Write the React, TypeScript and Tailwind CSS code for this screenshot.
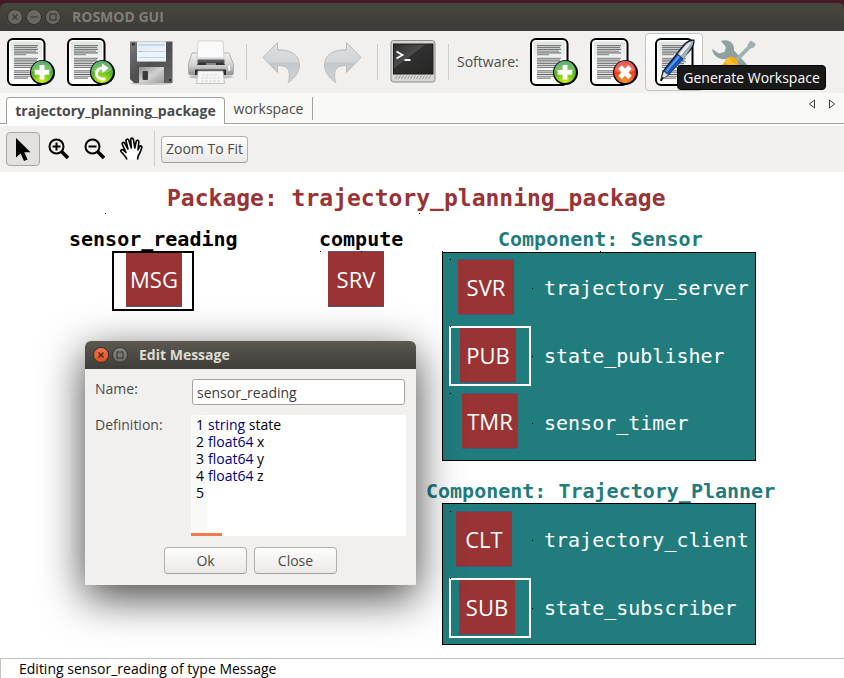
import type { ReactNode } from "react";

/* ---------- toolbar icons (48 x 48) ---------- */

const LINE_WIDTHS = [24, 23, 24, 22, 24, 12, 0, 24, 23, 24, 22, 24, 20, 0, 24, 23, 24, 21, 14];

function Page({ x = 0, children }: { x?: number; children?: ReactNode }) {
  return (
    <svg width="48" height="48" viewBox="0 0 48 48" aria-hidden="true">
      <defs>
        <linearGradient id="paper" x1="0" y1="0" x2="0" y2="1">
          <stop offset="0" stopColor="#dfe3e3" />
          <stop offset="0.5" stopColor="#f4f5f5" />
          <stop offset="1" stopColor="#ffffff" />
        </linearGradient>
        <radialGradient id="green" cx="0.5" cy="0.95" r="0.9">
          <stop offset="0" stopColor="#d8f010" />
          <stop offset="0.5" stopColor="#6cc424" />
          <stop offset="1" stopColor="#1f8f3c" />
        </radialGradient>
        <radialGradient id="red" cx="0.5" cy="0.95" r="0.9">
          <stop offset="0" stopColor="#ff9a20" />
          <stop offset="0.5" stopColor="#f4501c" />
          <stop offset="1" stopColor="#d81c1c" />
        </radialGradient>
      </defs>
      <g transform={`translate(${x} 0)`}>
        <rect x="1" y="1" width="36.5" height="46" rx="5" fill="#fff" stroke="#000" strokeWidth="2" />
        <rect x="3.5" y="3.5" width="31.500" height="41" rx="3" fill="url(#paper)" />
        {LINE_WIDTHS.map((w, i) => (
          <rect key={i} x="7" y={7.2 + i * 1.8} width={w} height="1" fill="#555" opacity={i % 2 ? 0.75 : 0.95} />
        ))}
      </g>
      {children}
    </svg>
  );
}

function Badge({ fill, children }: { fill: string; children: ReactNode }) {
  return (
    <g>
      <circle cx="35.500" cy="34.500" r="12.500" fill="#000" />
      <circle cx="35" cy="34" r="11" fill={fill} />
      <path d="M25 33a10 10 0 0 1 20-1c-5 3-13 4-20 1z" fill="#fff" opacity="0.28" />
      {children}
    </g>
  );
}

const AddPage = () => (
  <Page>
    <Badge fill="url(#green)">
      <path d="M35 27v14.500M27.700 34.300h14.600" stroke="#fff" strokeWidth="4.800" />
    </Badge>
  </Page>
);

const ReloadPage = () => (
  <Page>
    <Badge fill="url(#green)">
      <path d="M38.500 41c-5 .8-9-1.500-9-5.500 0-3.600 3-5.500 7-5.500" fill="none" stroke="#fff" strokeWidth="3" />
      <path d="M35 25.500l6.500 4.500-6 5z" fill="#fff" />
    </Badge>
  </Page>
);

const DeletePage = () => (
  <Page>
    <Badge fill="url(#red)">
      <path d="M30 29l10 10.500M40 29l-10 10.500" stroke="#fff" strokeWidth="4.800" />
    </Badge>
  </Page>
);

const WritePage = () => (
  <Page x={5}>
    <path d="M10 43l2.500-10L33 7c3-4 7-6 11.500-5.500C45 5 44 8 41 12L19 37z" fill="#10151c" />
    <path d="M11 42l2.800-8.500 4.400 3.300z" fill="#d9dde2" />
    <path d="M13.800 33.200L27 16.500l6.500 5L18.300 37z" fill="#1556b4" />
    <path d="M15.500 33L28 17.600l2 1.500L17 34z" fill="#5b9bea" />
    <path d="M27.500 16L34 8c2.500-3.300 5.500-5 9.500-5.200-.2 3.700-1.500 6-3.800 9L33.800 21z" fill="#a3adb8" />
    <path d="M29 15.800L35 8.600c2-2.500 4.500-4 7-4.800L31 17.400z" fill="#eef1f4" />
    <path d="M11 43l2-4" stroke="#000" strokeWidth="1.500" />
  </Page>
);

const Floppy = () => (
  <svg width="48" height="48" viewBox="0 0 48 48" aria-hidden="true">
    <defs>
      <linearGradient id="disk" x1="0" y1="0" x2="1" y2="1">
        <stop offset="0" stopColor="#7a7a7c" />
        <stop offset="0.5" stopColor="#4e4e50" />
        <stop offset="1" stopColor="#646466" />
      </linearGradient>
      <linearGradient id="metal" x1="0" y1="0" x2="1" y2="1">
        <stop offset="0" stopColor="#8d8d8d" />
        <stop offset="0.5" stopColor="#d2d2d2" />
        <stop offset="1" stopColor="#9a9a9a" />
      </linearGradient>
    </defs>
    <ellipse cx="24" cy="45.500" rx="21" ry="1.500" fill="#000" opacity="0.18" />
    <path d="M3 3.500h42.500V45H7l-4-4z" fill="url(#disk)" />
    <rect x="5" y="5" width="2.500" height="2.500" fill="#2e2e30" />
    <rect x="42" y="41" width="2" height="2" fill="#2e2e30" />
    <rect x="10" y="3.500" width="29" height="20" fill="#e4eef8" />
    <path d="M11.500 7h26M11.500 13.500h26M11.500 19.500h26" stroke="#a3c0de" strokeWidth="1" />
    <path d="M10 15l29-7v15.500H10z" fill="#fff" opacity="0.3" />
    <rect x="12" y="29" width="25" height="16" fill="url(#metal)" />
    <rect x="15.500" y="33" width="5.500" height="9" rx="1" fill="#3c3c3e" />
  </svg>
);

const Printer = () => (
  <svg width="48" height="48" viewBox="0 0 48 48" aria-hidden="true">
    <defs>
      <linearGradient id="printer" x1="0" y1="0" x2="0" y2="1">
        <stop offset="0" stopColor="#f2f2f2" />
        <stop offset="0.55" stopColor="#d2d2d2" />
        <stop offset="1" stopColor="#8e8e90" />
      </linearGradient>
    </defs>
    <ellipse cx="24" cy="39" rx="22" ry="2" fill="#000" opacity="0.2" />
    <path d="M5 15h37l4.500 11v9a2 2 0 0 1-2 2h-41a2 2 0 0 1-2-2v-9z" fill="url(#printer)" stroke="#a2a2a4" strokeWidth="0.800" />
    <path d="M11 3h25l1 17H10z" fill="#fafafa" stroke="#c8c8ca" strokeWidth="0.800" />
    <path d="M10.500 21.500h27V27h-27z" fill="#57585a" />
    <path d="M12 24.500h24l2 2.500H10z" fill="#303133" />
    <rect x="19" y="25" width="10" height="2" fill="#85868a" />
    <rect x="41" y="27" width="2.500" height="6" fill="#fafafa" stroke="#b0b0b0" strokeWidth="0.500" />
    <path d="M8 31.500h31V37H8z" fill="#2c2c2e" />
    <path d="M11 33h25l1.500 12.500h-28z" fill="#f6f6f6" stroke="#b4b4b6" strokeWidth="0.800" />
    <path d="M15 37h17M14 40h19M14 43h19" stroke="#cfcfd1" strokeWidth="0.800" strokeDasharray="3 1" />
  </svg>
);

function CurvedArrow({ flip = false }: { flip?: boolean }) {
  return (
    <svg width="48" height="48" viewBox="0 0 48 48" aria-hidden="true">
      <defs>
        <linearGradient id="arrow" x1="0" y1="0" x2="0" y2="1">
          <stop offset="0" stopColor="#dcdedf" />
          <stop offset="0.48" stopColor="#d4d6d8" />
          <stop offset="0.52" stopColor="#c5c8ca" />
          <stop offset="1" stopColor="#d2d4d5" />
        </linearGradient>
      </defs>
      <g transform={flip ? "translate(48 0) scale(-1 1)" : undefined}>
        <path
          d="M5 19.500L19.500 4.500v7.300C33 11.500 41.500 17 41.500 27c0 7-5 13.500-11.500 17.500 2.500-5 2.500-15.500-5-16.500-2-.4-4-.5-5.500-.5v7z"
          fill="url(#arrow)"
          stroke="#b9bcbe"
          strokeWidth="1"
          strokeLinejoin="round"
        />
      </g>
    </svg>
  );
}

const Terminal = () => (
  <svg width="48" height="48" viewBox="0 0 48 48" aria-hidden="true">
    <defs>
      <linearGradient id="screen" x1="0" y1="0" x2="1" y2="1">
        <stop offset="0" stopColor="#2c2c2c" />
        <stop offset="0.400" stopColor="#4c4c4c" />
        <stop offset="0.420" stopColor="#303030" />
        <stop offset="1" stopColor="#262626" />
      </linearGradient>
    </defs>
    <rect x="2" y="2.500" width="44" height="41.500" rx="2.500" fill="#d6d6d4" stroke="#8c8c8a" strokeWidth="1" />
    <rect x="4.500" y="6" width="39.500" height="30" fill="url(#screen)" stroke="#1c1c1c" strokeWidth="1" />
    <path d="M6.500 41l2-3.500M9.500 41l2-3.500M12.500 41l2-3.500M15.500 41l2-3.500M18.500 41l2-3.500M21.500 41l2-3.500M24.500 41l2-3.500M27.500 41l2-3.500M30.500 41l2-3.500M33.500 41l2-3.500M36.500 41l2-3.500M39.500 41l2-3.500" stroke="#9e9e9c" strokeWidth="1" />
    <path d="M7.500 13.500l6 3.500-6 3.500" fill="none" stroke="#fff" strokeWidth="1.800" />
    <path d="M15.500 22h6" stroke="#fff" strokeWidth="2" />
  </svg>
);

const Tools = () => (
  <svg width="48" height="48" viewBox="0 0 48 48" aria-hidden="true">
    <path d="M11 3c7-2.500 14 2 13 9.500L44 34l-6 6-20-19.500C10 23 3 18 2 11l7 4.500 5.500-1.500 1.500-5z" fill="#8fa0a1" />
    <path d="M41 2.500l5 3.500-2 3.500-3.500 1L28 23l-2.500-2.500L37.500 8l1-3z" fill="#a3b0b1" />
    <path d="M18 19.500c5-3 11.500 2.500 10 9.500L14 43c-5 4-12-2-8-8z" fill="#f7ae14" />
    <path d="M18 19.500l10 9.500-3.500 3.500-10-9.500z" fill="#fbc02d" />
  </svg>
);

/* ---------- view tool icons ---------- */

const Pointer = () => (
  <svg width="20" height="26" viewBox="0 0 20 26" aria-hidden="true">
    <path d="M3 2v19.500l4.600-4L11 25l3.600-1.600-3.300-7.200H17.500z" fill="#000" />
  </svg>
);

function Magnifier({ plus = false }: { plus?: boolean }) {
  return (
    <svg width="24" height="24" viewBox="0 0 24 24" fill="none" stroke="#000" aria-hidden="true">
      <circle cx="9.500" cy="9.500" r="7" strokeWidth="2" />
      <path d={plus ? "M9.500 5.500v8M5.500 9.500h8" : "M5.500 9.500h8"} strokeWidth="2" />
      <path d="M14.500 14.500l6.500 6.500" strokeWidth="3.600" />
    </svg>
  );
}

const Hand = () => (
  <svg width="24" height="24" viewBox="0 0 24 24" fill="#fff" stroke="#000" strokeWidth="1.600" strokeLinejoin="round" aria-hidden="true">
    <path d="M8 22.500c-1-3-3.500-5-6-8-.7-1.200.8-2.600 2.200-1.500L7 15.500 3.300 7.300c-.6-1.800 1.600-2.700 2.500-1L9 12 7 4c-.3-2 2-2.600 2.800-.8L12.300 11l-.6-8.500c0-1.900 2.300-1.900 2.700 0L15.800 11l1.400-6.700c.5-1.700 2.700-1.300 2.600.5L19 13l1.500-3.300c.9-1.400 2.700-.7 2.300.9-.8 3.400-2.500 6.400-3.600 8.400l-.7 3.500" />
  </svg>
);

/* ---------- chrome ---------- */

function ToolButton({ label, active = false, children }: { label: string; active?: boolean; children: ReactNode }) {
  return (
    <button
      aria-label={label}
      className={`flex h-[58px] w-[58px] shrink-0 items-center justify-center rounded-[4px] border ${
        active ? "border-[#c6c4c1] bg-gradient-to-b from-white to-[#f3f2f1]" : "border-transparent"
      }`}
    >
      {children}
    </button>
  );
}

const Separator = () => (
  <div className="flex w-[9px] shrink-0 justify-center">
    <div className="h-9 w-px bg-[#d0cecb]" />
  </div>
);

function WindowButton({ kind, tone }: { kind: "close" | "min" | "max"; tone: "dim" | "grey" | "orange" }) {
  const tones = {
    dim: "bg-[#6a6863] text-[#3c3b37] border-[#33322e]",
    grey: "bg-gradient-to-b from-[#8b8980] to-[#6b6962] text-[#3c3b37] border-[#35342f]",
    orange: "bg-gradient-to-b from-[#f4764a] to-[#de4f1f] text-[#4a1d0c] border-[#35342f]",
  };
  const names = { close: "Close window", min: "Minimize", max: "Maximize" };
  return (
    <button aria-label={names[kind]} className={`flex h-4 w-4 items-center justify-center rounded-full border ${tones[tone]}`}>
      <svg width="14" height="14" viewBox="0 0 14 14" fill="none" stroke="currentColor" strokeWidth="1.200" aria-hidden="true">
        {kind === "close" && <path d="M4.500 4.500l5 5M9.500 4.500l-5 5" />}
        {kind === "min" && <path d="M3.500 7h7" />}
        {kind === "max" && <rect x="4" y="4" width="6" height="6" />}
      </svg>
    </button>
  );
}

function ToolBar() {
  return (
    <div className="flex h-[62px] items-center gap-0.5 bg-[#f1f0ee] pl-0.5">
      <ToolButton label="New"><AddPage /></ToolButton>
      <ToolButton label="Open"><ReloadPage /></ToolButton>
      <ToolButton label="Save"><Floppy /></ToolButton>
      <ToolButton label="Print"><Printer /></ToolButton>
      <Separator />
      <ToolButton label="Undo"><CurvedArrow /></ToolButton>
      <ToolButton label="Redo"><CurvedArrow flip /></ToolButton>
      <Separator />
      <ToolButton label="Terminal"><Terminal /></ToolButton>
      <Separator />
      <span className="w-[68px] shrink-0 pl-0.5 text-[#4c4c4c]">Software:</span>
      <ToolButton label="Add software"><AddPage /></ToolButton>
      <ToolButton label="Delete software"><DeletePage /></ToolButton>
      <div className="relative">
        <ToolButton label="Generate" active><WritePage /></ToolButton>
        <div role="tooltip" className="absolute left-8 top-8 z-10 flex h-[25px] w-[149px] items-center justify-center whitespace-nowrap rounded-[4px] border border-black bg-[#191919] text-white">
          Generate Workspace
        </div>
      </div>
      <ToolButton label="Build"><Tools /></ToolButton>
    </div>
  );
}

function TabBar() {
  return (
    <div className="flex h-[33px] items-end border-b-2 border-white bg-[#f9f9f7]">
      <div className="h-[31px] w-1.5 border-b border-[#a3a19e]" />
      <div role="tablist" className="flex h-[27px]">
        <button role="tab" aria-selected="true" className="h-[27px] w-[219px] rounded-t-[4px] border border-b-0 border-[#a3a19e] bg-white text-center font-bold text-[#4a4a4a]">
          trajectory_planning_package
        </button>
        <button role="tab" aria-selected="false" className="flex h-[27px] w-[88px] items-start border-b border-[#a3a19e] text-[#4c4c4c]">
          <span className="flex h-[23px] w-full items-center justify-center border-r border-[#a3a19e]">workspace</span>
        </button>
      </div>
      <div className="flex h-[31px] flex-1 items-center justify-end gap-3 border-b border-[#a3a19e] pb-2 pr-2">
        <button aria-label="Previous tab">
          <svg width="8" height="10" viewBox="0 0 8 10" fill="none" stroke="#3c3c3c" aria-hidden="true"><path d="M6.500 1v8L1.500 5z" /></svg>
        </button>
        <button aria-label="Next tab">
          <svg width="8" height="10" viewBox="0 0 8 10" fill="none" stroke="#3c3c3c" aria-hidden="true"><path d="M1.500 1v8l5-4z" /></svg>
        </button>
      </div>
    </div>
  );
}

const viewTool = "flex h-[34px] w-[34px] shrink-0 items-center justify-center rounded-[4px] border";
const pushButton = "rounded-[4px] border border-[#b4b1ad] border-b-[#a19e9a] bg-gradient-to-b from-[#fdfdfd] to-[#ebe9e7] text-[#4c4c4c]";

function ViewBar() {
  return (
    <div className="flex h-[46px] items-center gap-0.5 bg-[#f1f0ee] pl-1.5">
      <button aria-label="Select" className={`${viewTool} border-[#a9a7a2] bg-[#e2e1de]`}><Pointer /></button>
      <button aria-label="Zoom in" className={`${viewTool} border-transparent`}><Magnifier plus /></button>
      <button aria-label="Zoom out" className={`${viewTool} border-transparent`}><Magnifier /></button>
      <button aria-label="Pan" className={`${viewTool} border-transparent`}><Hand /></button>
      <Separator />
      <button className={`${pushButton} h-[27px] w-[87px] whitespace-nowrap`}>Zoom To Fit</button>
    </div>
  );
}

/* ---------- model diagram ---------- */

const TILES = [
  { text: "MSG", x: 126, y: 79 },
  { text: "SRV", x: 328, y: 79 },
  { text: "SVR", x: 458, y: 87 },
  { text: "PUB", x: 460, y: 155 },
  { text: "TMR", x: 462, y: 221 },
  { text: "CLT", x: 456, y: 339 },
  { text: "SUB", x: 459, y: 407 },
];

const LABELS = [
  { text: "trajectory_server", x: 544, y: 104 },
  { text: "state_publisher", x: 544, y: 172 },
  { text: "sensor_timer", x: 544, y: 239 },
  { text: "trajectory_client", x: 544, y: 356 },
  { text: "state_subscriber", x: 544, y: 424 },
];

const HEADINGS = [
  { text: "sensor_reading", x: 69, y: 55, tone: "text-black" },
  { text: "compute", x: 319, y: 55, tone: "text-black" },
  { text: "Component: Sensor", x: 498, y: 55, tone: "text-[#217c7e]" },
  { text: "Component: Trajectory_Planner", x: 426, y: 307, tone: "text-[#217c7e]" },
];

const ANCHORS = [
  [105, 41], [419, 41], [320, 79], [361, 79], [442, 79], [600, 79],
  [450, 87], [450, 154], [450, 221], [532, 116], [532, 184], [532, 251],
  [450, 339], [450, 406], [532, 368], [532, 436],
];

function Diagram() {
  return (
    <div className="relative flex-1 overflow-hidden bg-white">
      <h1 className="absolute left-[167px] top-3 whitespace-pre font-['DejaVu_Sans_Mono',monospace] text-[23px] font-bold leading-7 text-[#993334]">
        Package: trajectory_planning_package
      </h1>
      <div className="absolute left-[442px] top-20 h-[209px] w-[314px] border border-black bg-[#217c7e]" />
      <div className="absolute left-[442px] top-[331px] h-[142px] w-[314px] border border-black bg-[#217c7e]" />
      {HEADINGS.map((h) => (
        <h2
          key={h.text}
          style={{ left: h.x, top: h.y }}
          className={`absolute whitespace-pre font-['DejaVu_Sans_Mono',monospace] text-[20px] font-bold leading-6 ${h.tone}`}
        >
          {h.text}
        </h2>
      ))}
      {TILES.map((t) => (
        <div
          key={t.text}
          style={{ left: t.x, top: t.y }}
          className="absolute flex h-14 w-14 items-center justify-center border-y border-[#4a5580] bg-[#993334] font-['Open_Sans',sans-serif] text-[22px] leading-6 text-white"
        >
          {t.text}
        </div>
      ))}
      {LABELS.map((l) => (
        <div
          key={l.text}
          style={{ left: l.x, top: l.y }}
          className="absolute whitespace-pre font-['DejaVu_Sans_Mono',monospace] text-[20px] leading-6 text-white"
        >
          {l.text}
        </div>
      ))}
      <div className="absolute left-28 top-[79px] h-[60px] w-[82px] border-2 border-black" />
      <div className="absolute left-[449px] top-[154px] h-[60px] w-[82px] border-2 border-white" />
      <div className="absolute left-[449px] top-[406px] h-[60px] w-[82px] border-2 border-white" />
      {ANCHORS.map(([x, y]) => (
        <div key={`${x}-${y}`} style={{ left: x, top: y }} className="absolute h-px w-px bg-black" />
      ))}
      <EditDialog />
    </div>
  );
}

/* ---------- dialog ---------- */

const DEFINITION = [
  ["string", "state"],
  ["float64", "x"],
  ["float64", "y"],
  ["float64", "z"],
];

function EditDialog() {
  return (
    <div
      role="dialog"
      aria-labelledby="dialog-title"
      className="absolute left-[85px] top-[169px] w-[331px] rounded-t-[6px] bg-[#f1f0ee] text-[#4c4c4c] shadow-[0_12px_44px_rgba(0,0,0,0.75)]"
    >
      <div className="flex h-7 items-center gap-[3px] rounded-t-[6px] bg-gradient-to-b from-[#5b594f] to-[#3e3d38] pl-2">
        <WindowButton kind="close" tone="orange" />
        <WindowButton kind="max" tone="grey" />
        <h2 id="dialog-title" className="pl-2 font-bold text-[#dfdbd2]">Edit Message</h2>
      </div>
      <form className="px-2.5 pb-[11px] pt-2.5" onSubmit={(e) => e.preventDefault()}>
        <div className="flex">
          <label htmlFor="name" className="w-[97px]">Name:</label>
          <input
            id="name"
            defaultValue="sensor_reading"
            className="h-[26px] min-w-0 flex-1 rounded-[3px] border border-[#a6a39f] bg-white px-1 text-[#3c3c3c] outline-none"
          />
          <div className="w-px" />
        </div>
        <div className="mt-2.5 flex">
          <div id="definition" className="w-24">Definition:</div>
          <div className="relative flex h-[121px] flex-1 bg-white leading-[17px] text-black">
            <div className="w-4 bg-[#f9f9f7] pr-[3px] pt-px text-right">
              {[1, 2, 3, 4, 5].map((n) => (
                <div key={n}>{n}</div>
              ))}
            </div>
            <div
              role="textbox"
              aria-multiline="true"
              aria-labelledby="definition"
              contentEditable
              suppressContentEditableWarning
              className="flex-1 pl-px pt-px outline-none"
            >
              {DEFINITION.map(([type, name]) => (
                <div key={name}>
                  <span className="text-[#00007f]">{type}</span> {name}
                </div>
              ))}
            </div>
            <div className="absolute bottom-0 left-0 h-[3px] w-[31px] bg-[#ee7a50]" />
          </div>
        </div>
        <div className="mt-[11px] flex justify-center gap-[7px]">
          <button className={`${pushButton} h-[27px] w-[83px]`}>Ok</button>
          <button className={`${pushButton} h-[27px] w-[83px]`}>Close</button>
        </div>
      </form>
    </div>
  );
}

export default function App() {
  return (
    <div className="flex h-screen flex-col overflow-hidden bg-[#471a2b] pt-[3px] font-['Open_Sans',sans-serif] text-[14px] leading-5">
      <header className="flex h-7 shrink-0 items-center gap-[3px] rounded-t-[6px] bg-gradient-to-b from-[#474641] to-[#3c3b37] pl-[7px]">
        <WindowButton kind="close" tone="dim" />
        <WindowButton kind="min" tone="dim" />
        <WindowButton kind="max" tone="dim" />
        <span className="pl-2 font-bold text-[#817e76]">ROSMOD GUI</span>
      </header>
      <ToolBar />
      <TabBar />
      <ViewBar />
      <Diagram />
      <footer className="flex h-5 shrink-0 items-center border-l border-t border-[#c5c1bb] bg-white pl-[18px] text-black">
        Editing sensor_reading of type Message
      </footer>
    </div>
  );
}
